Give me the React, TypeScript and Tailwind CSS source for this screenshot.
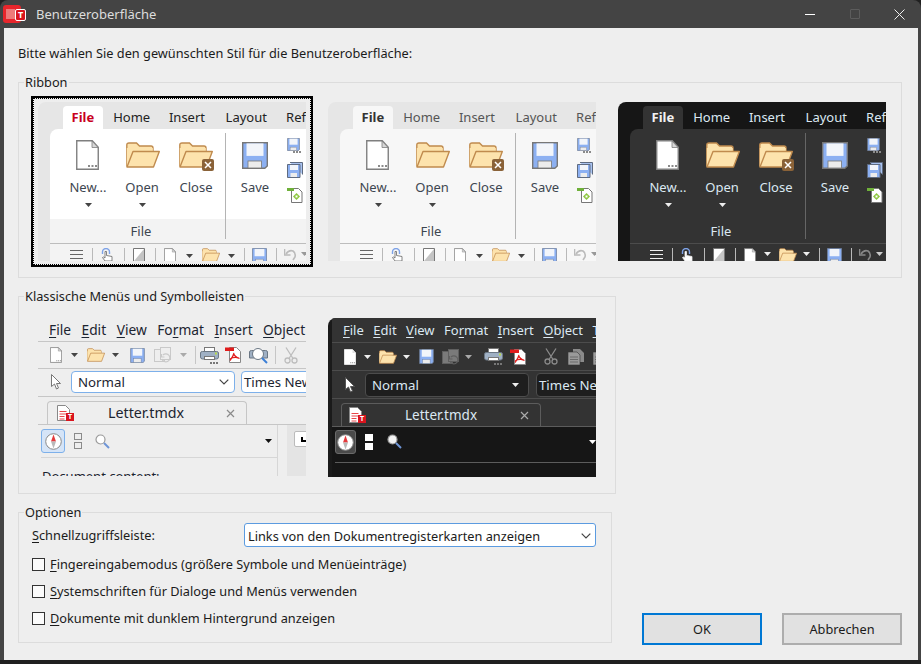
import { ReactNode } from 'react'

type Shade = {
    outer: string
    tabOn: string
    tab: string
    panel: string
    foot: string
    label: string
    sep: string
    line: string
    caret: string
    doc: string
    glyph: string
}

const white: Shade = {
    outer: 'bg-[#e6e6e6]',
    tabOn: 'bg-white text-[#c8001e] font-bold',
    tab: 'text-[#222222]',
    panel: 'bg-white',
    foot: 'bg-[#f3f3f3]',
    label: 'text-[#3d4650]',
    sep: 'bg-[#b4b4b4]',
    line: 'border-[#bdbdbd]',
    caret: '#444444',
    doc: '#ffffff',
    glyph: '#666666',
}

const gray: Shade = {
    outer: 'bg-[#e6e6e6]',
    tabOn: 'bg-[#f7f7f7] text-[#333333] font-bold',
    tab: 'text-[#555555]',
    panel: 'bg-[#f7f7f7]',
    foot: 'bg-[#f7f7f7]',
    label: 'text-[#3d4650]',
    sep: 'bg-[#b4b4b4]',
    line: 'border-[#bdbdbd]',
    caret: '#444444',
    doc: '#ffffff',
    glyph: '#666666',
}

const dark: Shade = {
    outer: 'bg-[#161616]',
    tabOn: 'bg-[#333333] text-[#f2f2f2] font-bold',
    tab: 'text-[#dbe8f2]',
    panel: 'bg-[#333333]',
    foot: 'bg-[#333333]',
    label: 'text-[#dbe8f2]',
    sep: 'bg-[#666666]',
    line: 'border-[#4c4c4c]',
    caret: '#eeeeee',
    doc: '#ffffff',
    glyph: '#eeeeee',
}

function Caret({ color = '#444444', className = '' }: { color?: string; className?: string }) {
    return (
        <svg width="7" height="4" viewBox="0 0 7 4" className={`shrink-0 ${className}`}>
            <path d="M0 0h7L3.5 4z" fill={color} />
        </svg>
    )
}

function Doc({ w = 23, h = 30, fill = '#ffffff', stroke = '#7f7f7f', dots = true, className = '' }: { w?: number; h?: number; fill?: string; stroke?: string; dots?: boolean; className?: string }) {
    return (
        <svg width={w} height={h} viewBox="0 0 23 30" className={`shrink-0 ${className}`}>
            <path d="M.75.75h15.5l6 6.5v22h-21.5z" fill={fill} stroke={stroke} strokeWidth="1.4" />
            <path d="M16 1v6.5h6z" fill="#d8d8d8" stroke={stroke} strokeWidth=".8" />
            {dots && <path d="M13 26h2v2h-2zM16.500 26h2v2h-2zM20 26h2v2h-2z" transform="translate(-1 -1)" fill="#8a8a8a" />}
        </svg>
    )
}

function Folder({ w = 34, h = 26, className = '' }: { w?: number; h?: number; className?: string }) {
    return (
        <svg width={w} height={h} viewBox="0 0 34 26" className={`shrink-0 ${className}`}>
            <path d="M.8 24.500V3Q.8 1 3 1h7.500l3 3H25q2 0 2 2v3" fill="#fde3ad" stroke="#c08b4e" strokeWidth="1.400" />
            <path d="M.8 24.500V6h26v3" fill="#fde3ad" />
            <path d="M7 9.500h26.300L27.500 25H1z" fill="#fde3ad" stroke="#c08b4e" strokeWidth="1.400" strokeLinejoin="round" />
        </svg>
    )
}

function Save({ w = 26, h = 27, line = '#777777', className = '' }: { w?: number; h?: number; line?: string; className?: string }) {
    return (
        <svg width={w} height={h} viewBox="0 0 26 27" className={`shrink-0 ${className}`}>
            <path d="M.7.7h24.600v23.300l-2.500 2.300H.7z" fill="#8cb0f2" stroke={line} strokeWidth="1.400" />
            <rect x="4.500" y="1.400" width="17" height="12.500" fill="#f2f5fa" />
            <rect x="6" y="19" width="13.500" height="7" fill="#ececec" stroke={line} strokeWidth=".8" />
        </svg>
    )
}

function SmallSave({ dots, line = '#6f7788' }: { dots?: boolean; line?: string }) {
    return (
        <div className="flex h-[15px] w-[15px] shrink-0 flex-col">
            <Save w={13} h={13} line={line} />
            {dots && <div className="ml-[6px] h-[2px] w-[8px] border-b-2 border-dotted border-[#8a8a8a]" />}
        </div>
    )
}

function StackSave({ w = 16, h = 16 }: { w?: number; h?: number }) {
    return (
        <svg width={w} height={h} viewBox="0 0 16 16" className="shrink-0">
            <path d="M3 .5h12.500v12" fill="#a8c2f0" stroke="#5f6b80" />
            <path d="M.5 2.500h12.500v13H.5z" fill="#8cb0f2" stroke="#5f6b80" />
            <rect x="3" y="3" width="8" height="5" fill="#f2f5fa" />
            <rect x="3.500" y="11" width="6.500" height="4" fill="#ececec" />
        </svg>
    )
}

function GreenDoc() {
    return (
        <svg width="16" height="16" viewBox="0 0 16 16" className="shrink-0">
            <path d="M4.500 1.500h7l3.500 3.500v10.500H4.500z" fill="#ffffff" stroke="#777777" />
            <rect x="0" y="1" width="7" height="3" fill="#6fb03a" />
            <path d="M9.500 6l3.500 3.500-3.500 3.500L6 9.500z" fill="#8dc63f" />
            <rect x="8.500" y="8.500" width="2" height="2" fill="#ffffff" />
        </svg>
    )
}

function TinyLines({ color }: { color: string }) {
    return (
        <svg width="13" height="13" viewBox="0 0 13 13" className="shrink-0">
            <path d="M0 2.500h13M0 6.500h13M0 10.500h13" stroke={color} />
        </svg>
    )
}

function Hand({ color }: { color: string }) {
    return (
        <svg width="13" height="14" viewBox="0 0 13 14" className="shrink-0">
            <path d="M1.500 6V4a3.500 3.500 0 0 1 7 0v2" fill="none" stroke="#7ea3e8" strokeWidth="1.400" />
            <path d="M4 13L1.500 9.500l1-.5L4 10V3.500h1.500v4l5.500 1V13z" fill="#ffffff" stroke={color} strokeWidth=".8" />
        </svg>
    )
}

function Undo({ color }: { color: string }) {
    return (
        <svg width="13" height="14" viewBox="0 0 13 14" className="shrink-0">
            <path d="M2 6Q5 1.500 9 3q3 2 2 6l-2 3" fill="none" stroke={color} strokeWidth="1.600" />
            <path d="M.5 1v6h6" fill="none" stroke={color} strokeWidth="1.600" />
        </svg>
    )
}

function QatSep({ className = '' }: { className?: string }) {
    return <div className={`h-[13px] w-px shrink-0 bg-[#b9b9b9] ${className}`} />
}

function BigButton({ icon, label, caret, color, labelClass, className = '' }: { icon: ReactNode; label: string; caret?: boolean; color: string; labelClass: string; className?: string }) {
    return (
        <div className={`flex w-[54px] shrink-0 flex-col items-center ${className}`}>
            <div className="mt-[10px] flex h-[32px] items-center justify-center">{icon}</div>
            <div className={`mt-[7px] h-[18px] text-[13px] leading-[18px] ${labelClass}`}>{label}</div>
            {caret && <Caret color={color} className="mt-[7px]" />}
        </div>
    )
}

function RibbonPreview({ t, isDark }: { t: Shade; isDark?: boolean }) {
    return (
        <div className={`flex h-[159px] w-[268px] shrink-0 flex-col overflow-hidden rounded-tl-[8px] text-[13px] ${t.outer}`}>
            <div className="flex h-[27px] shrink-0 items-end pl-[25px]">
                <div className={`flex h-[23px] w-[40px] items-center justify-center rounded-t-[4px] pb-[2px] ${t.tabOn}`}>File</div>
                <div className={`flex h-[23px] w-[58px] items-center justify-center pb-[2px] ${t.tab}`}>Home</div>
                <div className={`flex h-[23px] w-[53px] items-center justify-center pb-[2px] ${t.tab}`}>Insert</div>
                <div className={`flex h-[23px] w-[66px] items-center justify-center pb-[2px] ${t.tab}`}>Layout</div>
                <div className={`flex h-[23px] items-center pb-[2px] pl-[7px] ${t.tab}`}>Ref</div>
            </div>
            <div className={`ml-[12px] flex h-[114px] shrink-0 overflow-hidden rounded-tl-[8px] ${t.panel}`}>
                <div className="flex w-[175px] shrink-0 flex-col">
                    <div className="flex h-[90px] pl-[11px]">
                        <BigButton icon={<Doc fill={t.doc} className="-ml-[2px]" />} label="New..." caret color={t.caret} labelClass={t.label} />
                        <BigButton icon={<Folder className="ml-[2px]" />} label="Open" caret color={t.caret} labelClass={t.label} />
                        <BigButton
                            icon={
                                <div className="relative h-[26px] w-[34px]">
                                    <Folder />
                                    <div className="absolute left-[23px] top-[17px] flex h-[12px] w-[12px] items-center justify-center rounded-[2px] bg-[#8a6238]">
                                        <svg width="8" height="8" viewBox="0 0 8 8">
                                            <path d="M1 1l6 6M7 1L1 7" stroke="#ffffff" strokeWidth="1.500" />
                                        </svg>
                                    </div>
                                </div>
                            }
                            label="Close"
                            color={t.caret}
                            labelClass={t.label}
                        />
                    </div>
                    <div className={`flex h-[24px] items-center justify-center pl-[7px] ${t.foot} ${t.label}`}>File</div>
                </div>
                <div className="flex w-px shrink-0 flex-col">
                    <div className={`h-[4px] ${t.panel}`} />
                    <div className={`flex-1 ${t.sep}`} />
                    <div className={`h-[4px] ${t.foot}`} />
                </div>
                <div className="flex flex-1 flex-col">
                    <div className="flex h-[90px] pl-[2px]">
                        <BigButton icon={<Save />} label="Save" color={t.caret} labelClass={t.label} />
                        <div className="ml-[5px] flex flex-col gap-[9px] pt-[9px]">
                            <SmallSave dots />
                            <StackSave />
                            <GreenDoc />
                        </div>
                    </div>
                    <div className={`h-[24px] ${t.foot}`} />
                </div>
            </div>
            <div className={`ml-[12px] flex h-[18px] shrink-0 items-start overflow-hidden border-t pt-[4px] ${t.line} ${t.foot}`}>
                <div className="ml-[20px]">
                    <TinyLines color={t.glyph} />
                </div>
                <QatSep className="ml-[9px]" />
                <div className="ml-[8px]">
                    <Hand color={t.glyph} />
                </div>
                <QatSep className="ml-[10px]" />
                <svg width="12" height="14" viewBox="0 0 12 14" className="ml-[8px] shrink-0">
                    <path d="M.5.5h11v13H.5z" fill="#ffffff" stroke="#777777" />
                    <path d="M11 1v12H1z" fill="#c4c4c4" />
                </svg>
                <QatSep className="ml-[10px]" />
                <Doc w={12} h={16} fill={t.doc} stroke="#777777" dots={false} className="ml-[8px]" />
                <Caret color={t.caret} className={isDark ? 'ml-[8px] mt-[4px]' : 'ml-[10px] mt-[6px]'} />
                <Folder w={18} h={14} className={isDark ? 'ml-[8px]' : 'ml-[9px]'} />
                <Caret color={t.caret} className={isDark ? 'ml-[6px] mt-[4px]' : 'ml-[8px] mt-[6px]'} />
                <QatSep className="ml-[9px]" />
                <Save w={15} h={16} line="#6f7f9a" className="ml-[7px]" />
                <QatSep className="ml-[9px]" />
                <div className="ml-[7px]">
                    <Undo color={isDark ? '#888888' : '#bbbbbb'} />
                </div>
                <Caret color={isDark ? '#cccccc' : '#999999'} className="ml-[4px] mt-[4px]" />
            </div>
        </div>
    )
}

function Printer() {
    return (
        <svg width="19" height="17" viewBox="0 0 19 17" className="shrink-0">
            <rect x="4.500" y=".5" width="10" height="5" fill="#ffffff" stroke="#777777" />
            <path d="M.5 10V6q0-1.500 2-1.500h14q2 0 2 1.500v4q0 2-2 2h-14q-2 0-2-2z" fill="#9fb0c4" stroke="#6b7784" />
            <rect x="15" y="5.500" width="2" height="2" fill="#b7d84b" />
            <rect x="4.500" y="9.500" width="10" height="3" fill="#ffffff" stroke="#777777" />
            <path d="M10 15h2v2h-2zM13 15h2v2h-2zM16 15h2v2h-2z" fill="#777777" />
        </svg>
    )
}

function Pdf() {
    return (
        <svg width="16" height="16" viewBox="0 0 16 16" className="shrink-0">
            <path d="M4.500.5h7l4 4v11h-11z" fill="#ffffff" stroke="#888888" />
            <rect x="0" y=".5" width="9" height="3.500" fill="#e01b1b" />
            <path d="M9 6q-1 4-4 7.500M8.500 6q1 4 6 5.500M5 12q4-2.500 9-1" fill="none" stroke="#e01b1b" strokeWidth="1.200" />
        </svg>
    )
}

function PrintPreview() {
    return (
        <svg width="20" height="17" viewBox="0 0 20 17" className="shrink-0">
            <path d="M.5 11V5q0-1.500 2-1.500h14q2 0 2 1.500v6z" fill="#9fb0c4" stroke="#6b7784" />
            <circle cx="9" cy="7" r="5.500" fill="#ffffff" stroke="#6b7784" />
            <path d="M13 11l5 5" stroke="#3b7fd6" strokeWidth="2" />
        </svg>
    )
}

function Scissors({ color }: { color: string }) {
    return (
        <svg width="14" height="17" viewBox="0 0 14 17" className="shrink-0">
            <path d="M2 .5l7 11M12 .5l-7 11" stroke={color} strokeWidth="1.300" />
            <circle cx="3.500" cy="13.500" r="2.500" fill="none" stroke={color} strokeWidth="1.300" />
            <circle cx="10.500" cy="13.500" r="2.500" fill="none" stroke={color} strokeWidth="1.300" />
        </svg>
    )
}

function Copies({ stroke, fill }: { stroke: string; fill: string }) {
    return (
        <svg width="18" height="16" viewBox="0 0 18 16" className="shrink-0">
            <rect x=".5" y="2.500" width="10" height="12" fill={fill} stroke={stroke} />
            <rect x="6.500" y=".5" width="10" height="12" fill={fill} stroke={stroke} />
            <path d="M8 12a4 4 0 1 0 1-4M7.500 7v3h3" fill="none" stroke={stroke} strokeWidth="1.200" />
        </svg>
    )
}

function GrayCopy() {
    return (
        <svg width="16" height="16" viewBox="0 0 16 16" className="shrink-0">
            <path d="M5 0h7l4 4v9H5z" fill="#8a8a8a" />
            <path d="M0 3h9l3 3v10H0z" fill="#9a9a9a" stroke="#333333" strokeWidth=".6" />
            <path d="M2 8h8M2 10.500h8M2 13h8" stroke="#6a6a6a" />
        </svg>
    )
}

function Cursor({ fill, stroke }: { fill: string; stroke: string }) {
    return (
        <svg width="10" height="16" viewBox="0 0 10 16" className="shrink-0">
            <path d="M.5.500v12l3-2.500 2 5 2-1-2-4.500h4z" fill={fill} stroke={stroke} />
        </svg>
    )
}

function Compass() {
    return (
        <svg width="17" height="17" viewBox="0 0 17 17">
            <circle cx="8.500" cy="8.500" r="7.800" fill="#ffffff" stroke="#888888" />
            <path d="M8.500 1.500L11 8.500H6z" fill="#e4393c" />
            <path d="M8.500 15.500L11 8.500H6z" fill="#b9b9b9" />
        </svg>
    )
}

function Search({ glass }: { glass: string }) {
    return (
        <svg width="15" height="15" viewBox="0 0 15 15" className="shrink-0">
            <circle cx="5.500" cy="5.500" r="4.500" fill={glass} stroke="#9a9a9a" strokeWidth="1.200" />
            <path d="M9 9l5 5" stroke="#6e95d6" strokeWidth="2" />
        </svg>
    )
}

function TmdxIcon() {
    return (
        <div className="relative h-[17px] w-[16px] shrink-0">
            <svg width="13" height="16" viewBox="0 0 13 16">
                <path d="M.5.5h8l4 4v11H.5z" fill="#ffffff" stroke="#888888" />
                <path d="M2.500 6.500h7M2.500 9h7M2.500 11.500h5M2.500 14h5" stroke="#e8464a" />
            </svg>
            <div className="absolute left-[9px] top-[8px] flex h-[8px] w-[8px] items-center justify-center bg-[#d9141e] text-[7px] font-bold leading-none text-white">T</div>
        </div>
    )
}

function Chevron({ color = '#444444' }: { color?: string }) {
    return (
        <svg width="10" height="6" viewBox="0 0 10 6" className="shrink-0">
            <path d="M.7.7L5 5l4.300-4.300" fill="none" stroke={color} strokeWidth="1.200" />
        </svg>
    )
}

function Menu({ names, className }: { names: [string, string, string][]; className: string }) {
    return (
        <div className={`flex ${className}`}>
            {names.map(([a, b, c]) => (
                <span key={a + b + c}>
                    {a}
                    <u className="underline-offset-2">{b}</u>
                    {c}
                </span>
            ))}
        </div>
    )
}

function ClassicLight() {
    return (
        <div className="flex h-[158px] w-[268px] shrink-0 flex-col overflow-hidden text-[13.250px] text-[#1c2430]">
            <div className="flex h-[24px] shrink-0 items-center border-b border-[#c6c6c6]">
                <Menu
                    className="gap-[10.500px] whitespace-nowrap pl-[11px] text-[13.750px]"
                    names={[['', 'F', 'ile'], ['', 'E', 'dit'], ['', 'V', 'iew'], ['Fo', 'r', 'mat'], ['', 'I', 'nsert'], ['', 'O', 'bject']]}
                />
            </div>
            <div className="flex h-[27px] shrink-0 items-center border-b border-[#c6c6c6] pl-[12px]">
                <Doc w={12} h={16} stroke="#777777" />
                <Caret className="ml-[9px]" />
                <Folder w={18} h={14} className="ml-[9px]" />
                <Caret className="ml-[7px]" />
                <Save w={15} h={15} line="#6f7f9a" className="ml-[11px]" />
                <div className="ml-[9px]">
                    <Copies stroke="#c9c9c9" fill="#eeeeee" />
                </div>
                <Caret color="#aaaaaa" className="ml-[8px]" />
                <div className="ml-[8px] h-[18px] w-px bg-[#c6c6c6]" />
                <div className="ml-[4px]">
                    <Printer />
                </div>
                <div className="ml-[6px]">
                    <Pdf />
                </div>
                <div className="ml-[8px]">
                    <PrintPreview />
                </div>
                <div className="ml-[6px] h-[18px] w-px bg-[#c6c6c6]" />
                <div className="ml-[8px]">
                    <Scissors color="#bdbdbd" />
                </div>
            </div>
            <div className="flex h-[28px] shrink-0 items-center border-b border-[#c6c6c6] pb-[2px] pl-[13px]">
                <Cursor fill="#ffffff" stroke="#777777" />
                <div className="ml-[10px] flex h-[22px] w-[164px] shrink-0 items-center justify-between rounded-[4px] border border-[#7db0ea] bg-white pl-[6px] pr-[5px]">
                    Normal
                    <Chevron />
                </div>
                <div className="ml-[6px] flex h-[22px] w-[80px] shrink-0 items-center whitespace-nowrap rounded-[4px] border border-[#7db0ea] bg-white pl-[2px]">Times New</div>
            </div>
            <div className="flex h-[28px] shrink-0 items-end border-b border-[#c6c6c6] pl-[9px]">
                <div className="flex h-[23px] w-[200px] items-center rounded-t-[4px] border border-b-0 border-[#c6c6c6] pl-[9px] pr-[11px]">
                    <TmdxIcon />
                    <span className="ml-[35px] flex-1 text-[14.250px]">Letter.tmdx</span>
                    <svg width="9" height="9" viewBox="0 0 9 9">
                        <path d="M1 1l7 7M8 1L1 8" stroke="#8a8a8a" strokeWidth="1.200" />
                    </svg>
                </div>
            </div>
            <div className="flex flex-1">
                <div className="flex w-[240px] shrink-0 flex-col border-r border-[#d6d6d6] pl-[3px]">
                    <div className="flex h-[33px] items-center border-b border-[#d6d6d6]">
                        <div className="flex h-[24px] w-[24px] items-center justify-center rounded-[3px] border border-[#7db0ea] bg-[#d5e4f7]">
                            <Compass />
                        </div>
                        <div className="ml-[9px] flex flex-col gap-[2px]">
                            <div className="h-[7px] w-[8px] border border-[#8a8a8a]" />
                            <div className="h-[7px] w-[8px] border border-[#8a8a8a]" />
                        </div>
                        <div className="ml-[13px]">
                            <Search glass="#ffffff" />
                        </div>
                        <Caret color="#111111" className="ml-[155px]" />
                    </div>
                    <div className="pl-[1px] pt-[9px] text-[13px]">Document content:</div>
                </div>
                <div className="ml-[9px] flex-1 bg-[#e4e4e4] pl-[7px] pt-[6px]">
                    <div className="flex h-[16px] w-[18px] items-center justify-center rounded-[2px] border border-[#bbbbbb] bg-white">
                        <div className="h-[5px] w-[5px] border-b-2 border-l-2 border-black" />
                    </div>
                </div>
            </div>
        </div>
    )
}

function ClassicDark() {
    return (
        <div className="flex h-[159px] w-[268px] shrink-0 overflow-hidden rounded-tl-[8px] bg-[#1a1a1a] text-[13.250px] text-[#dbe8f2]">
            <div className="flex w-full flex-col pl-[4px]">
                <div className="flex h-[25px] shrink-0 items-center border-b border-[#4c4c4c] bg-[#333333]">
                    <Menu
                        className="gap-[9.500px] whitespace-nowrap pl-[11px] text-[13px]"
                        names={[['', 'F', 'ile'], ['', 'E', 'dit'], ['', 'V', 'iew'], ['Fo', 'r', 'mat'], ['', 'I', 'nsert'], ['', 'O', 'bject'], ['', 'T', '']]}
                    />
                </div>
                <div className="flex h-[28px] shrink-0 items-center border-b border-[#4c4c4c] bg-[#333333] pl-[12px]">
                    <Doc w={12} h={16} stroke="#ffffff" />
                    <Caret color="#eeeeee" className="ml-[8px]" />
                    <Folder w={18} h={14} className="ml-[8px]" />
                    <Caret color="#eeeeee" className="ml-[6px]" />
                    <Save w={15} h={15} line="#6f7f9a" className="ml-[9px]" />
                    <div className="ml-[8px]">
                        <Copies stroke="#5f5f5f" fill="#7a7a7a" />
                    </div>
                    <Caret color="#aaaaaa" className="ml-[5px]" />
                    <div className="ml-[7px] h-[18px] w-px bg-[#5c5c5c]" />
                    <div className="ml-[5px]">
                        <Printer />
                    </div>
                    <div className="ml-[7px]">
                        <Pdf />
                    </div>
                    <div className="ml-[6px] h-[18px] w-px bg-[#5c5c5c]" />
                    <div className="ml-[12px]">
                        <Scissors color="#8a8a8a" />
                    </div>
                    <div className="ml-[10px]">
                        <GrayCopy />
                    </div>
                    <div className="ml-[9px]">
                        <GrayCopy />
                    </div>
                </div>
                <div className="flex h-[28px] shrink-0 items-center border-b border-[#4c4c4c] bg-[#333333] pl-[13px]">
                    <Cursor fill="#ffffff" stroke="#555555" />
                    <div className="ml-[10px] flex h-[24px] w-[164px] shrink-0 items-center justify-between rounded-[4px] border border-[#4c4c4c] bg-[#1e1e1e] pl-[6px] pr-[9px]">
                        Normal
                        <Caret color="#eeeeee" />
                    </div>
                    <div className="ml-[7px] flex h-[24px] w-[80px] shrink-0 items-center whitespace-nowrap rounded-[4px] border border-[#4c4c4c] bg-[#1e1e1e] pl-[2px]">Times New</div>
                </div>
                <div className="flex h-[28px] shrink-0 items-end border-b border-[#5c5c5c] bg-[#333333] pl-[9px]">
                    <div className="flex h-[23px] w-[200px] items-center rounded-t-[4px] border border-b-0 border-[#5c5c5c] pl-[7px] pr-[11px]">
                        <TmdxIcon />
                        <span className="ml-[40px] flex-1 text-[13.500px]">Letter.tmdx</span>
                        <svg width="9" height="9" viewBox="0 0 9 9">
                            <path d="M1 1l7 7M8 1L1 8" stroke="#aaaaaa" strokeWidth="1.200" />
                        </svg>
                    </div>
                </div>
                <div className="flex-1 bg-[#161616] pl-[3px] pt-[3px]">
                    <div className="flex h-[33px] items-start border-b border-[#5c5c5c] pb-[6px]">
                        <div className="flex h-[24px] w-[24px] items-center justify-center rounded-[3px] border border-[#6a6a6a] bg-[#4a4a4a]">
                            <Compass />
                        </div>
                        <div className="ml-[9px] mt-[4px] flex flex-col gap-[2px]">
                            <div className="h-[7px] w-[8px] bg-white" />
                            <div className="h-[7px] w-[8px] bg-white" />
                        </div>
                        <div className="ml-[14px] mt-[4px]">
                            <Search glass="#f2f2f2" />
                        </div>
                        <Caret color="#ffffff" className="ml-[187px] mt-[10px]" />
                    </div>
                </div>
            </div>
        </div>
    )
}

function Check({ children }: { children: ReactNode }) {
    return (
        <label className="flex h-[18px] items-center gap-[5px]">
            <input type="checkbox" className="h-[13px] w-[13px] shrink-0 appearance-none border border-[#333333] bg-[#fbfbfb]" />
            <span>{children}</span>
        </label>
    )
}

export default function App() {
    return (
        <div className="h-[664px] w-[921px] overflow-hidden bg-[#202020] font-['Noto_Sans',sans-serif] text-[12.750px] leading-[18px] text-[#1b1b1b]">
            <div className="flex h-[660px] flex-col rounded-t-[8px] bg-[#444444] pb-0 pl-[4px] pr-[3px]">
                <div className="-ml-[4px] -mr-[3px] flex h-[28px] shrink-0 items-center pl-[3px]">
                    <div className="relative h-[19px] w-[22px] shrink-0">
                        <div className="flex h-[18px] w-[18px] overflow-hidden rounded-[3px] bg-[#e8262c] pl-[3px] pt-[4px]">
                            <div className="h-[10px] w-[9px] bg-[#ee7a7a]" />
                        </div>
                        <div className="absolute left-[12px] top-[4px] flex h-[12px] w-[11px] items-center justify-center rounded-[2px] border border-white bg-[#d9141e] text-[9px] font-bold leading-none text-white">T</div>
                    </div>
                    <span className="ml-[11px] text-[13px] text-[#dddddd]">Benutzeroberfläche</span>
                    <div className="ml-auto flex h-full items-center pr-[16px]">
                        <div className="h-px w-[10px] bg-white" />
                        <div className="ml-[35px] h-[10px] w-[10px] rounded-[1px] border border-[#5c5c5c]" />
                        <svg width="11" height="11" viewBox="0 0 11 11" className="ml-[34px]">
                            <path d="M.5.500l10 10M10.500.500l-10 10" stroke="#eeeeee" />
                        </svg>
                    </div>
                </div>
                <div className="flex flex-1 flex-col bg-[#eeeeee] pl-[14px] pr-[16px] pt-[16px]">
                    <div className="h-[18px]">Bitte wählen Sie den gewünschten Stil für die Benutzeroberfläche:</div>
                    <fieldset className="mt-[11px] h-[205px] w-[884px] border border-[#dcdcdc]">
                        <legend className="ml-[5px] px-[1px]">Ribbon</legend>
                        <div className="flex pl-[12px] pt-[5px]">
                            <div className="h-[171px] w-[282px] shrink-0 border-2 border-black">
                                <div className="h-full border border-dotted border-black pl-[4px] pt-[3px]">
                                    <RibbonPreview t={white} />
                                </div>
                            </div>
                            <div className="ml-[15px] pt-[6px]">
                                <RibbonPreview t={gray} />
                            </div>
                            <div className="ml-[22px] pt-[6px]">
                                <RibbonPreview t={dark} isDark />
                            </div>
                        </div>
                    </fieldset>
                    <fieldset className="mt-[9px] h-[207px] w-[598px] border border-[#dcdcdc]">
                        <legend className="ml-[5px] px-[1px]">Klassische Menüs und Symbolleisten</legend>
                        <div className="flex pl-[19px] pt-[13px]">
                            <ClassicLight />
                            <div className="ml-[22px]">
                                <ClassicDark />
                            </div>
                        </div>
                    </fieldset>
                    <div className="mt-[9px] flex items-end justify-between">
                        <fieldset className="mb-[2px] h-[140px] w-[594px] border border-[#dcdcdc] pl-[13px] pr-[15px]">
                            <legend className="-ml-[8px] px-[1px]">Optionen</legend>
                            <div className="mt-[2px] flex h-[24px] items-center justify-between">
                                <span>
                                    <u className="underline-offset-2">S</u>chnellzugriffsleiste:
                                </span>
                                <div className="flex h-[24px] w-[352px] items-center justify-between rounded-[3px] border border-[#5b9be0] bg-white pl-[3px] pr-[4px] pt-[1px]">
                                    Links von den Dokumentregisterkarten anzeigen
                                    <Chevron />
                                </div>
                            </div>
                            <div className="mt-[8px] flex flex-col gap-[9px]">
                                <Check>
                                    <u className="underline-offset-2">F</u>ingereingabemodus (größere Symbole und Menüeinträge)
                                </Check>
                                <Check>
                                    <u className="underline-offset-2">S</u>ystemschriften für Dialoge und Menüs verwenden
                                </Check>
                                <Check>
                                    <u className="underline-offset-2">D</u>okumente mit dunklem Hintergrund anzeigen
                                </Check>
                            </div>
                        </fieldset>
                        <div className="flex gap-[20px]">
                            <button className="h-[32px] w-[120px] border-2 border-[#0078d4] bg-[#e1e1e1]">OK</button>
                            <button className="h-[32px] w-[120px] border-2 border-[#adadad] bg-[#e1e1e1]">Abbrechen</button>
                        </div>
                    </div>
                </div>
            </div>
        </div>
    )
}
